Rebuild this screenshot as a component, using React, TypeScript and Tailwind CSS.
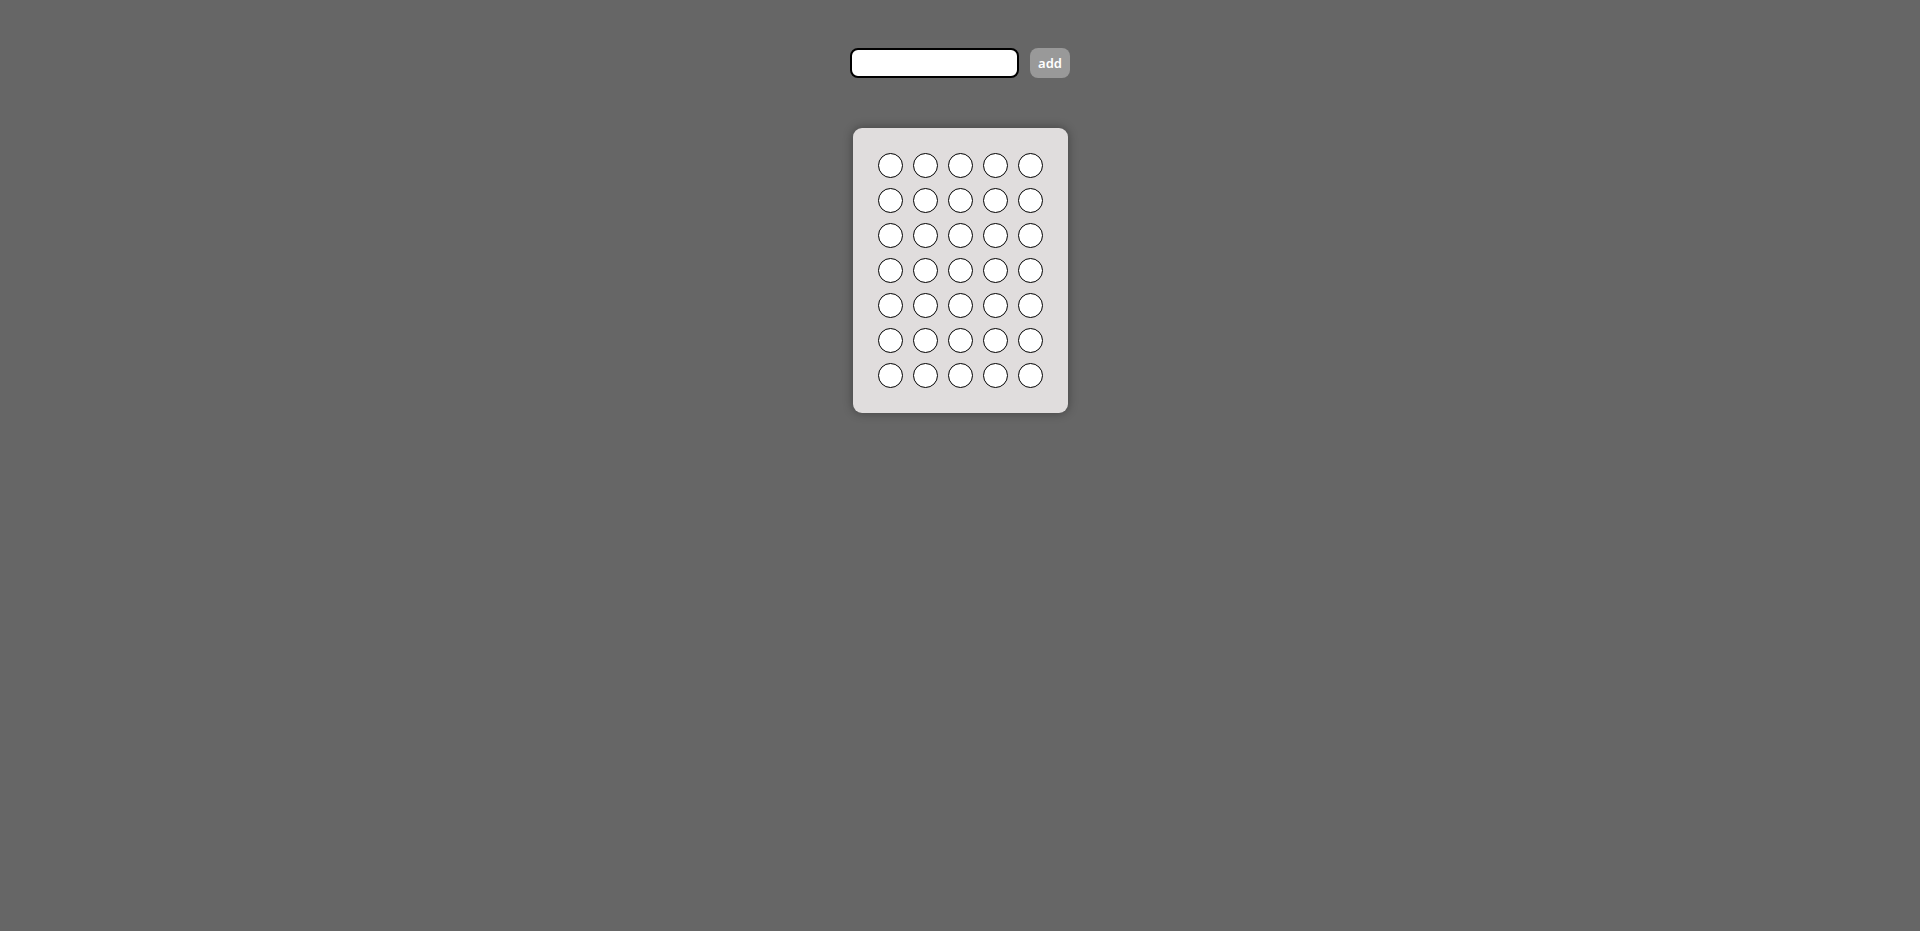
import { useState } from "react";

const ROWS = 7;
const COLS = 5;

export default function App() {
  const [value, setValue] = useState("");

  return (
    <div className="min-h-screen w-full bg-[#666666] flex flex-col items-center pt-[48px]" style={{ fontFamily: '"Noto Sans", "Open Sans", Arial, sans-serif' }}>
      <div className="flex items-start gap-[11px]">
        <input
          value={value}
          onChange={(e) => setValue(e.target.value)}
          className="w-[169px] h-[30px] bg-white border-2 border-black rounded-[8px] px-2 text-sm outline-none"
        />
        <button className="w-[40px] h-[30px] rounded-[8px] bg-[#999999] text-white text-[13px] font-semibold leading-none">
          add
        </button>
      </div>

      <div className="mt-[50px] p-[20px] bg-[#e0dddd] rounded-[9px] shadow-[0_0_10px_1px_rgba(0,0,0,0.3)]">
        <div className="grid grid-cols-5">
          {Array.from({ length: ROWS * COLS }).map((_, i) => (
            <div key={i} className="w-[25px] h-[25px] m-[5px] rounded-full bg-white border border-black" />
          ))}
        </div>
      </div>
    </div>
  );
}
